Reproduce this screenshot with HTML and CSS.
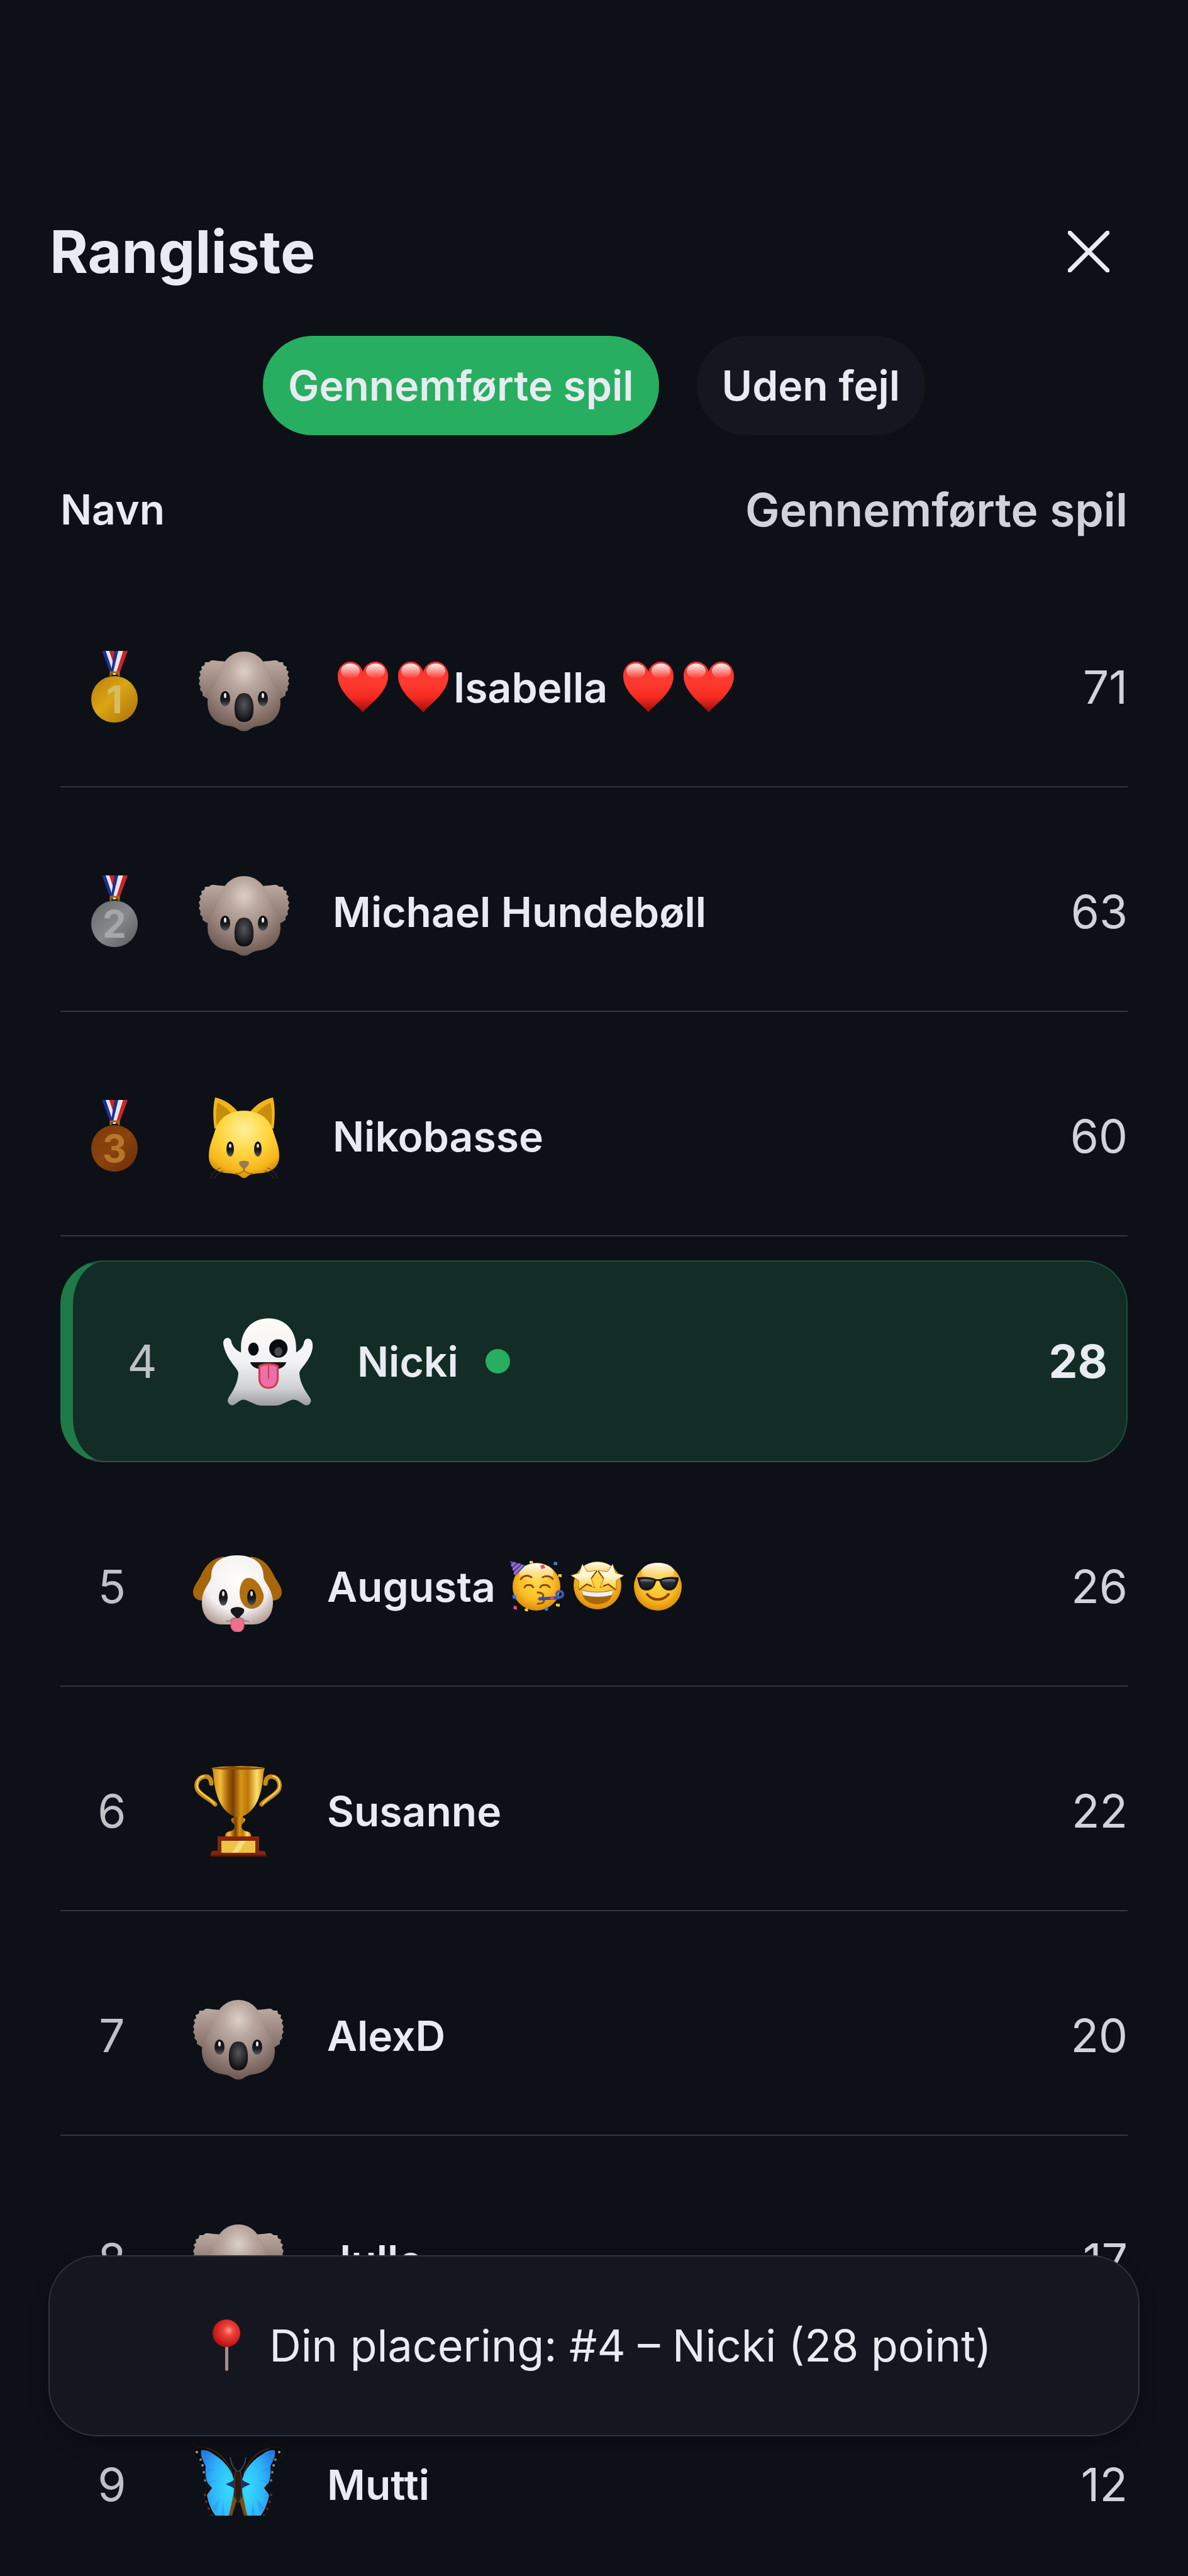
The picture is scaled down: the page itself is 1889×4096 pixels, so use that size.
FILE: index.html
```html
<!DOCTYPE html>
<html lang="da">
<head>
<meta charset="utf-8">
<meta name="viewport" content="width=device-width, initial-scale=1">
<title>Rangliste</title>
<link rel="stylesheet" href="styles.css">
</head>
<body>
<svg class="sprite" width="0" height="0" aria-hidden="true">
  <defs>
    <radialGradient id="koalaHead" cx=".5" cy=".25" r=".75"><stop offset="0" stop-color="#dccfc8"/><stop offset=".3" stop-color="#b8a59d"/><stop offset=".65" stop-color="#9a857e"/><stop offset="1" stop-color="#6d5852"/></radialGradient>
    <linearGradient id="koalaEar" x1="0" y1="0" x2="0" y2="1"><stop offset="0" stop-color="#bba89f"/><stop offset="1" stop-color="#85706a"/></linearGradient>
    <radialGradient id="koalaNose" cx=".5" cy=".4" r=".6"><stop offset="0" stop-color="#55555a"/><stop offset=".6" stop-color="#2a2a2e"/><stop offset="1" stop-color="#0c0c10"/></radialGradient>
    <linearGradient id="eye" x1="0" y1="0" x2="0" y2="1"><stop offset="0" stop-color="#0b0c10"/><stop offset=".6" stop-color="#1a1c20"/><stop offset="1" stop-color="#5a5c60"/></linearGradient>
    <linearGradient id="heartFill" x1="0" y1="0" x2="0" y2="1"><stop offset="0" stop-color="#f0322a"/><stop offset=".4" stop-color="#ff3b30"/><stop offset=".7" stop-color="#f52a20"/><stop offset="1" stop-color="#9c0a08"/></linearGradient>
    <linearGradient id="shine" x1="0" y1="0" x2="0" y2="1"><stop offset="0" stop-color="#fff" stop-opacity=".95"/><stop offset="1" stop-color="#fff" stop-opacity="0"/></linearGradient>
    <linearGradient id="gold" x1="0" y1="0" x2="1" y2="1"><stop offset="0" stop-color="#b87d08"/><stop offset=".45" stop-color="#d9a516"/><stop offset="1" stop-color="#a96f05"/></linearGradient>
    <linearGradient id="silver" x1="0" y1="0" x2="1" y2="1"><stop offset="0" stop-color="#67686c"/><stop offset=".5" stop-color="#87888c"/><stop offset="1" stop-color="#5a5b5f"/></linearGradient>
    <linearGradient id="bronze" x1="0" y1="0" x2="1" y2="1"><stop offset="0" stop-color="#7d3a0a"/><stop offset=".5" stop-color="#8a430c"/><stop offset="1" stop-color="#6a2b06"/></linearGradient>
    <radialGradient id="catHead" cx=".5" cy=".28" r=".72"><stop offset="0" stop-color="#fff09a"/><stop offset=".5" stop-color="#ffd43c"/><stop offset=".85" stop-color="#f5b51a"/><stop offset="1" stop-color="#d08d08"/></radialGradient>
    <linearGradient id="ghostBody" x1="0" y1="0" x2="0" y2="1"><stop offset="0" stop-color="#fdfbf6"/><stop offset=".5" stop-color="#f1f2f5"/><stop offset=".8" stop-color="#cfd1d4"/><stop offset="1" stop-color="#9a9ca0"/></linearGradient>
    <radialGradient id="dogHead" cx=".5" cy=".35" r=".7"><stop offset="0" stop-color="#fffefb"/><stop offset=".65" stop-color="#f1eff0"/><stop offset="1" stop-color="#b59d96"/></radialGradient>
    <linearGradient id="cup" x1="0" y1="0" x2="1" y2="0"><stop offset="0" stop-color="#c88a10"/><stop offset=".16" stop-color="#f0bd3a"/><stop offset=".3" stop-color="#a8650a"/><stop offset=".4" stop-color="#7a3d04"/><stop offset=".55" stop-color="#d89512"/><stop offset=".68" stop-color="#b97608"/><stop offset=".85" stop-color="#ffe06a"/><stop offset="1" stop-color="#c58610"/></linearGradient>
    <radialGradient id="wing" cx=".85" cy=".55" r=".9"><stop offset="0" stop-color="#35dcfb"/><stop offset=".55" stop-color="#2fb6fa"/><stop offset="1" stop-color="#2580e8"/></radialGradient>
    <radialGradient id="face" cx=".5" cy=".42" r=".6"><stop offset="0" stop-color="#ffd845"/><stop offset=".6" stop-color="#f9bd25"/><stop offset="1" stop-color="#d98606"/></radialGradient>
    <linearGradient id="star" x1="0" y1="0" x2="0" y2="1"><stop offset="0" stop-color="#fffdf2"/><stop offset=".45" stop-color="#fdf6cf"/><stop offset="1" stop-color="#f8c62c"/></linearGradient>
    <linearGradient id="lens" x1="0" y1="0" x2="0" y2="1"><stop offset="0" stop-color="#8a8b8e"/><stop offset=".35" stop-color="#2b2c32"/><stop offset="1" stop-color="#14161d"/></linearGradient>
    <radialGradient id="pinHead" cx=".58" cy=".4" r=".6"><stop offset="0" stop-color="#ff9a8a"/><stop offset=".3" stop-color="#f0453c"/><stop offset="1" stop-color="#b80f10"/></radialGradient>
  </defs>

  <symbol id="koala" viewBox="0 0 144 144">
    <g id="koalaEarLeft"><path fill="url(#koalaEar)" d="M44 31l-12-1-8-1-4 0-4 3-6 0-1 5-5 2 1 5-4 3 2 5-3 5 2 5-2 4 3 5-1 5 4 4 0 5 8 5 16 0z"/></g>
    <use href="#koalaEarLeft" transform="matrix(-1 0 0 1 144 0)"/>
    <path fill="url(#koalaHead)" d="M72 15c18 0 32 12 37 30 3 10 6 16 10 23 6 9 11 16 11 28 0 21-13 34-32 37-10 1-14 4-19 7-4 2-10 2-14 0-5-3-9-6-19-7-19-3-32-16-32-37 0-12 5-19 11-28 4-7 7-13 10-23 5-18 19-30 37-30z"/>
    <ellipse cx="42" cy="90" rx="8" ry="12" fill="url(#eye)"/><ellipse cx="102" cy="90" rx="8" ry="12" fill="url(#eye)"/>
    <ellipse cx="42" cy="85" rx="2" ry="4" fill="#e8e8ea"/><ellipse cx="102" cy="85" rx="2" ry="4" fill="#e8e8ea"/>
    <path fill="url(#koalaNose)" d="M72 81c10 0 14 9 15 20 1 14-2 26-15 26s-16-12-15-26c1-11 5-20 15-20z"/>
  </symbol>

  <symbol id="heart" viewBox="0 0 96 96">
    <path fill="url(#heartFill)" d="M48 89C40 77 8 58 8 31 8 18 17 8 28 8c9 0 17 6 20 16C51 14 59 8 68 8c11 0 20 10 20 23 0 27-32 46-40 58z"/>
    <ellipse cx="28" cy="23" rx="15" ry="12" fill="url(#shine)"/><ellipse cx="68" cy="23" rx="15" ry="12" fill="url(#shine)"/>
  </symbol>

  <symbol id="ribbon" viewBox="0 0 129 129">
    <path fill="#1d2f8f" d="M44 7h6l14 37h-6z"/><path fill="#e4e4ea" d="M50 7h6l10 30-3 8z"/><path fill="#d3222a" d="M56 7h8v10l2 12-1 6z"/>
    <path fill="#1d2f8f" d="M64 7h6L64 44l-5-6z"/><path fill="#e4e4ea" d="M70 7h8L66 45h-5z"/><path fill="#d3222a" d="M78 7h7L71 45h-5z"/>
    <path fill="none" stroke="#a06a10" stroke-width="3" d="M58 47v-6h13v6"/>
  </symbol>
</svg>

<header class="topbar">
  <h1 class="title">Rangliste</h1>
  <button class="close" type="button" aria-label="Luk">
    <svg class="close-icon" viewBox="0 0 66 66" aria-hidden="true"><path d="M3 3l60 60M63 3L3 63"/></svg>
  </button>
</header>

<nav class="tabs" aria-label="Visning">
  <button class="tab tab-active" type="button" aria-pressed="true">Gennemførte spil</button>
  <button class="tab" type="button" aria-pressed="false">Uden fejl</button>
</nav>

<main class="scroller">
  <table class="board">
    <thead>
      <tr class="head-row"><th class="head-name" scope="col">Navn</th><th class="head-score" scope="col">Gennemførte spil</th></tr>
    </thead>
    <tbody class="rows">
      <tr class="row">
        <td class="rank"><svg class="medal" viewBox="0 0 129 129" role="img" aria-label="1"><use href="#ribbon"/><circle cx="64" cy="84" r="37" fill="url(#gold)"/><text class="medal-digit" x="64" y="106" fill="#d9bc62">1</text></svg></td>
        <td class="player"><svg class="avatar" role="img" aria-label="Koala"><use href="#koala"/></svg>
          <span class="name"><svg class="emoji" aria-hidden="true"><use href="#heart"/></svg><svg class="emoji" aria-hidden="true"><use href="#heart"/></svg>Isabella <svg class="emoji" aria-hidden="true"><use href="#heart"/></svg><svg class="emoji" aria-hidden="true"><use href="#heart"/></svg></span></td>
        <td class="score">71</td>
      </tr>
      <tr class="row">
        <td class="rank"><svg class="medal" viewBox="0 0 129 129" role="img" aria-label="2"><use href="#ribbon"/><circle cx="64" cy="84" r="37" fill="url(#silver)"/><text class="medal-digit" x="64" y="106" fill="#a5a7ab">2</text></svg></td>
        <td class="player"><svg class="avatar" role="img" aria-label="Koala"><use href="#koala"/></svg><span class="name">Michael Hundebøll</span></td>
        <td class="score">63</td>
      </tr>
      <tr class="row">
        <td class="rank"><svg class="medal" viewBox="0 0 129 129" role="img" aria-label="3"><use href="#ribbon"/><circle cx="64" cy="84" r="37" fill="url(#bronze)"/><text class="medal-digit" x="64" y="106" fill="#b8762a">3</text></svg></td>
        <td class="player">
          <svg class="avatar" viewBox="0 0 144 144" role="img" aria-label="Kat">
            <path fill="#f2b51c" d="M26 10c14 3 27 11 37 24L25 60c-2-16-3-34 1-50zM118 10c-14 3-27 11-37 24l38 26c2-16 3-34-1-50z"/>
            <path fill="#c58f0a" d="M30 18c9 5 18 11 24 20L29 56c-2-13-2-26 1-38zM114 18c-9 5-18 11-24 20l25 18c2-13 2-26-1-38z"/>
            <path fill="url(#catHead)" d="M72 31c23 0 40 12 46 31 3 12 10 24 10 41 0 16-10 25-26 27-12 1-22 2-25 6-3 3-7 3-10 0-3-4-13-5-25-6-16-2-26-11-26-27 0-17 7-29 10-41 6-19 23-31 46-31z"/>
            <ellipse cx="50" cy="92" rx="6" ry="12" fill="url(#eye)"/><ellipse cx="94" cy="92" rx="6" ry="12" fill="url(#eye)"/>
            <ellipse cx="50" cy="87" rx="2" ry="3" fill="#ddd"/><ellipse cx="94" cy="87" rx="2" ry="3" fill="#ddd"/>
            <path fill="#96795a" d="M64 113c4-3 12-3 16 0 0 5-5 9-8 11-3-2-8-6-8-11z"/>
            <path fill="none" stroke="#a06c08" stroke-width="2" d="M72 122v4c-3 4-9 6-14 5M72 126c3 4 9 6 14 5"/>
            <path fill="none" stroke="#4a3a14" stroke-width="1" d="M35 122c-8 3-14 9-17 17M39 127c-7 2-11 6-14 12M109 122c8 3 14 9 17 17M105 127c7 2 11 6 14 12"/>
          </svg>
          <span class="name">Nikobasse</span></td>
        <td class="score">60</td>
      </tr>
      <tr class="row row-me">
        <td class="rank">4</td>
        <td class="player">
          <svg class="avatar" viewBox="3 3 138 138" role="img" aria-label="Spøgelse">
            <path fill="url(#ghostBody)" d="M72 6c26 0 42 19 42 44v8c6-3 11-9 12-15 1-7 9-8 12-2 4 10-2 24-10 34-4 6-9 10-9 15 1 15 9 27 16 37 5 7-3 15-10 10-6-4-12-9-19-6-9 3-15 8-22 8h-24c-7 0-13-5-22-8-7-3-11 2-17 6-7 5-14-3-10-10 7-10 14-22 15-37 0-5-5-9-9-15C9 65 3 51 3 43 4 35 12 33 15 40c1 8 7 15 15 18v-8C30 25 46 6 72 6z"/>
            <ellipse cx="49" cy="53" rx="8" ry="10" fill="#0b0c12"/><circle cx="87" cy="52" r="14" fill="#0b0c12"/><ellipse cx="87" cy="57" rx="6" ry="7" fill="#4a4b50"/>
            <path fill="#111218" d="M44 73h55c-2 8-12 12-27 12S46 81 44 73z"/>
            <path fill="#ee6ea8" stroke="#c9404e" stroke-width="3" d="M58 79c8-4 20-4 28 0v18c0 9-5 15-14 15s-14-6-14-15z"/>
            <path fill="none" stroke="#c9404e" stroke-width="2" d="M72 78v20"/>
          </svg>
          <span class="name">Nicki</span><span class="dot"></span></td>
        <td class="score">28</td>
      </tr>
      <tr class="row">
        <td class="rank">5</td>
        <td class="player">
          <svg class="avatar" viewBox="0 0 144 144" role="img" aria-label="Hund">
            <path fill="#a8660a" d="M50 24C30 26 20 38 12 55 5 67 0 73 0 81c0 9 7 12 13 13 10-2 16-20 22-36zM91 24c20 2 30 14 38 31 7 12 12 18 12 26 0 9-7 12-13 13-10-2-16-20-22-36z"/>
            <path fill="url(#dogHead)" d="M70 22c25 0 42 12 42 33 0 10 15 20 15 42 0 23-14 35-32 35H46c-18 0-32-12-32-35 0-22 15-32 15-42 0-21 16-33 41-33z"/>
            <path fill="#b26f0e" d="M88 58c12 0 20 13 24 26 2 12-7 23-19 23S74 95 74 82c0-12 5-24 14-24z"/>
            <ellipse cx="48" cy="89" rx="7" ry="13" fill="url(#eye)"/><ellipse cx="93" cy="89" rx="7" ry="13" fill="url(#eye)"/>
            <ellipse cx="48" cy="83" rx="2" ry="4" fill="#ddd"/><ellipse cx="93" cy="83" rx="2" ry="4" fill="#ddd"/>
            <path fill="#f0708c" stroke="#c94a68" d="M60 124c3-4 18-4 21 0v10c0 6-4 10-10 10s-11-4-11-10z"/>
            <path fill="none" stroke="#9b8a86" stroke-width="2" d="M70 118c-2 6-10 9-18 9M71 118c2 6 10 9 18 9"/>
            <path fill="#18181c" d="M60 108c4-5 17-5 21 0 2 6-6 10-8 14h-4c-3-4-11-8-9-14z"/>
          </svg>
          <span class="name">Augusta <svg class="emoji" viewBox="0 0 96 96" role="img" aria-label="Fest">
            <circle cx="48" cy="49" r="38" fill="url(#face)"/><ellipse cx="48" cy="27" rx="27" ry="15" fill="url(#shine)"/>
            <path fill="#3a56b8" d="M6 8l25 7-17 17z"/><path fill="none" stroke="#f06aa8" stroke-width="2" d="M8 16l6-6M10 22l12-10M12 29l14-14"/>
            <path fill="none" stroke="#8a4a08" stroke-width="3" stroke-linecap="round" d="M23 37c4-6 12-7 17-3M58 34c5-3 13-2 16 3M29 50c2-5 11-5 14 0M54 50c2-5 12-5 15 0M50 58c10 1 12 6 4 10 9 1 8 8-4 8"/>
            <path fill="#3352b0" d="M51 66l30-2 4 5-33 2z"/><circle cx="85" cy="61" r="5" fill="none" stroke="#4c58b8" stroke-width="4"/>
            <path fill="#e0486c" d="M54 15l6-1 2 5-6 2zM12 79l5 1v6l-6-2zM70 65h5v4h-5z"/>
            <path fill="#2f7fe0" d="M76 9l5 1v5l-6-1zM10 62l6 1v6l-6-2zM62 82l5 1-1 4h-5z"/>
            <path fill="#f8c838" d="M37 8h5l1 4h-6zM83 29h5v5l-6-1zM79 76h6v5l-6-1zM29 84l5-1 1 5h-5z"/>
          </svg><svg class="emoji" viewBox="0 0 96 96" role="img" aria-label="Stjerneøjne">
            <circle cx="49" cy="47" r="38" fill="url(#face)"/><ellipse cx="49" cy="23" rx="25" ry="13" fill="url(#shine)"/>
            <g id="starEye"><path fill="url(#star)" stroke="#b8740a" stroke-width="1" d="M7 31l13-4 5-14 8 12 15-2-9 13 6 15-14-6-12 9V39z"/></g>
            <use href="#starEye" transform="matrix(-1 0 0 1 98 0)"/>
            <path fill="none" stroke="#84400a" stroke-width="2" d="M48 24l-9 12M50 24l9 12M20 54l12-9 8 3M78 54l-12-9-8 3"/>
            <path fill="#a8680a" d="M24 54c16 4 34 4 50 0 0 14-10 23-25 23S24 68 24 54z"/><path fill="#eceef4" d="M24 55c16 4 34 4 50 0l-2 7c-14 4-32 4-46 0z"/>
          </svg><svg class="emoji" viewBox="0 0 96 96" role="img" aria-label="Solbriller">
            <circle cx="49" cy="49" r="38" fill="url(#face)"/><ellipse cx="49" cy="25" rx="26" ry="14" fill="url(#shine)"/>
            <path fill="#16181f" d="M16 34c11-1 23-1 30 3h7c7-4 19-4 29-3v4c-3 10-5 17-15 17-9 0-13-7-15-14-1-2-5-2-6 0-2 7-6 14-15 14-10 0-12-7-14-17z"/>
            <path fill="url(#lens)" d="M21 38c7-2 17-1 22 1-1 7-5 13-11 13-7 0-10-6-11-14zM77 38c-7-2-17-1-22 1 1 7 5 13 11 13 7 0 10-6 11-14z"/>
            <path fill="none" stroke="#8f3f0a" stroke-width="4" stroke-linecap="round" d="M32 61c9 11 25 11 34 0"/>
          </svg></span></td>
        <td class="score">26</td>
      </tr>
      <tr class="row">
        <td class="rank">6</td>
        <td class="player">
          <svg class="avatar" viewBox="0 0 144 144" role="img" aria-label="Pokal">
            <g fill="none" stroke-linecap="round"><path stroke="#c78a14" stroke-width="7" d="M29 28c0-8-5-12-11-11C9 18 4 27 6 35c2 10 22 18 29 26M115 28c0-8 5-12 11-11 9 1 13 10 11 18-2 10-22 18-28 26"/><path stroke="#ffdf70" stroke-width="2" d="M17 16C8 18 5 27 7 35c2 8 20 16 27 25M127 16c9 2 12 11 10 19-2 8-20 16-26 25"/></g>
            <path fill="url(#cup)" d="M30 3c26-4 58-4 84 0l-2 8c-2 35-12 60-33 69v6h-14v-6C44 71 34 46 32 11z"/>
            <ellipse cx="72" cy="4" rx="41" ry="2" fill="#8a5208"/>
            <path fill="url(#cup)" d="M61 84c4-4 18-4 22 0 1 6-6 6-6 12 0 5 4 7 8 8 7 1 9 7 6 10H53c-4-4-1-9 5-10 5-1 8-3 8-8 0-6-7-6-5-12z"/>
            <path fill="#7b2a0c" d="M39 112h66v24H39z"/><path fill="#8c2210" d="M39 112h66v4H39zM30 135h84l3 9H27z"/><path fill="#5c1a08" d="M27 141h90v3H27z"/>
            <path fill="#eec244" d="M45 119h54v19H45z"/><path fill="#fff09a" d="M62 138l12-19h10l-12 19z" opacity=".6"/>
          </svg>
          <span class="name">Susanne</span></td>
        <td class="score">22</td>
      </tr>
      <tr class="row">
        <td class="rank">7</td>
        <td class="player"><svg class="avatar" role="img" aria-label="Koala"><use href="#koala"/></svg><span class="name">AlexD</span></td>
        <td class="score">20</td>
      </tr>
      <tr class="row">
        <td class="rank">8</td>
        <td class="player"><svg class="avatar" role="img" aria-label="Koala"><use href="#koala"/></svg><span class="name">Julle</span></td>
        <td class="score">17</td>
      </tr>
      <tr class="row">
        <td class="rank">9</td>
        <td class="player">
          <svg class="avatar" viewBox="0 0 144 144" role="img" aria-label="Sommerfugl">
            <g id="wingLeft">
              <path fill="#0a0a0e" stroke="#24211f" stroke-width="1" d="M1 17C2 11 24 12 36 19c16 9 26 26 29 42v30c-2 18-4 32-8 42H38c-9-6-15-26-20-40 0-8 4-12 8-16-8-12-6-26-12-36C8 33 0 25 1 17z"/>
              <path fill="none" stroke="#472410" stroke-width="2" d="M22 14c20 5 34 22 41 42"/>
              <path fill="url(#wing)" d="M13 17c8-1 14 2 19 6 13 7 25 20 30 32l3 9-7 6 7 8c0 16-5 32-10 50H42c-10-8-18-26-20-40l8-11-7-8c-3-8-4-17-3-26-3-8-9-15-7-26z"/>
              <path fill="#2f8ef2" opacity=".5" d="M13 17l9 14-5 0zM20 45l16 4-15 3zM24 70l17-7-17 4zM30 108l12-14-5 22zM44 122l4-22 3 24z"/>
              <path fill="#7a4d10" d="M64 88l5 10-8 26-4-2z"/><path fill="#16306e" d="M52 71l13-6v12z"/>
              <circle cx="6" cy="20" r="2" fill="#aaa"/><circle cx="12" cy="32" r="2" fill="#888"/><circle cx="15" cy="41" r="2" fill="#999"/><circle cx="17" cy="52" r="2" fill="#888"/><circle cx="19" cy="65" r="2" fill="#777"/>
              <circle cx="19" cy="88" r="2" fill="#8a2010"/><circle cx="21" cy="99" r="2" fill="#8a2010"/><circle cx="25" cy="110" r="2" fill="#8a2010"/><circle cx="30" cy="121" r="2" fill="#8a2010"/>
            </g>
            <use href="#wingLeft" transform="matrix(-1 0 0 1 143 0)"/>
            <path fill="#2c1a10" stroke="#55504c" stroke-width="1" d="M68 50h7c3 10 3 38-1 48-1 3-4 3-5 0-4-10-4-38-1-48z"/>
            <path fill="none" stroke="#45454a" stroke-width="2" d="M59 28c1 10 5 17 10 22M84 28c-1 10-5 17-10 22"/>
          </svg>
          <span class="name">Mutti</span></td>
        <td class="score">12</td>
      </tr>
    </tbody>
  </table>
</main>

<aside class="placement">
  <p class="placement-text"><svg class="emoji" viewBox="0 0 96 96" aria-hidden="true"><path fill="#a58f8b" d="M46 46h5v39c0 4-5 4-5 0z"/><circle cx="48" cy="28" r="22" fill="url(#pinHead)"/></svg> Din placering: #4 – Nicki (28 point)</p>
</aside>
</body>
</html>
```

FILE: styles.css
```css
:root {
  --bg: #0d1017;
  --surface: #14171f;
  --line: #33373e;
  --text: #e8ebf1;
  --muted: #d0d3da;
  --accent: #27ae60;
}

* {
  box-sizing: border-box;
}

body {
  margin: 0;
  height: 100vh;
  padding: 342px 0 96px;
  display: flex;
  flex-direction: column;
  overflow: hidden;
  position: relative;
  background: var(--bg);
  color: var(--text);
  font-family: Inter, "Liberation Sans", sans-serif;
}

button {
  border: 0;
  padding: 0;
  font: inherit;
  color: inherit;
  background: none;
  cursor: pointer;
}

.sprite {
  position: absolute;
}

.topbar {
  display: flex;
  justify-content: space-between;
  align-items: center;
  padding: 0 77px 0 79px;
}

.title {
  margin: 0;
  font-size: 93px;
  line-height: 116px;
  font-weight: 700;
}

.close {
  width: 162px;
  height: 116px;
  display: flex;
  align-items: center;
  justify-content: center;
}

.close-icon {
  width: 66px;
  height: 66px;
  fill: none;
  stroke: var(--text);
  stroke-width: 7px;
  stroke-linecap: round;
}

.tabs {
  display: flex;
  justify-content: center;
  gap: 60px;
  margin-top: 76px;
}

.tab {
  height: 158px;
  padding: 0 40px;
  border-radius: 79px;
  background: var(--surface);
  font-size: 66px;
  font-weight: 600;
}

.tab-active {
  background: var(--accent);
}

.scroller {
  flex: 1;
  min-height: 0;
  overflow: hidden;
  padding: 72px 96px 0;
}

.board {
  display: block;
}

.board thead {
  display: block;
}

.head-row {
  display: flex;
  justify-content: space-between;
  align-items: center;
  height: 92px;
}

.board th,
.board td {
  padding: 0;
}

.head-name {
  font-size: 66px;
  font-weight: 600;
}

.head-score {
  font-size: 73px;
  font-weight: 600;
  color: var(--muted);
}

.rows {
  display: flex;
  flex-direction: column;
  gap: 36px;
  margin-top: 75px;
}

.row {
  display: flex;
  align-items: center;
  height: 321px;
  padding: 4px 0 0 22px;
  border-bottom: 2px solid var(--line);
}

.row-me {
  margin-top: 2px;
  padding: 0 30px 0 50px;
  background: #132c26;
  border: 2px solid #1a5038;
  border-left: 20px solid #1f7a49;
  border-bottom-color: #3a4a48;
  border-radius: 70px;
}

.rank {
  min-width: 120px;
  display: flex;
  justify-content: center;
  font-size: 73px;
  color: #bec1c6;
}

.medal {
  width: 129px;
  height: 129px;
}

.medal-digit {
  font-size: 60px;
  font-weight: 700;
  text-anchor: middle;
}

.player {
  flex: 1;
  display: flex;
  align-items: center;
  margin-left: 69px;
}

.avatar {
  width: 144px;
  height: 144px;
  flex: none;
  margin-right: 69px;
}

.name {
  font-size: 66px;
  line-height: 96px;
  font-weight: 600;
  white-space: nowrap;
}

.emoji {
  width: 96px;
  height: 96px;
  vertical-align: -23px;
}

.dot {
  width: 39px;
  height: 39px;
  margin-left: 43px;
  border-radius: 50%;
  background: var(--accent);
}

.score {
  font-size: 73px;
  color: var(--muted);
}

.row-me .score {
  font-weight: 700;
  color: var(--text);
}

.placement {
  position: absolute;
  left: 77px;
  right: 77px;
  bottom: 222px;
  height: 288px;
  display: flex;
  align-items: center;
  justify-content: center;
  background: var(--surface);
  border: 2px solid #30343b;
  border-radius: 77px;
  box-shadow: 0 14px 28px rgba(0, 0, 0, 0.25);
}

.placement-text {
  margin: 0;
  font-size: 70px;
  line-height: 96px;
  white-space: nowrap;
}
```
